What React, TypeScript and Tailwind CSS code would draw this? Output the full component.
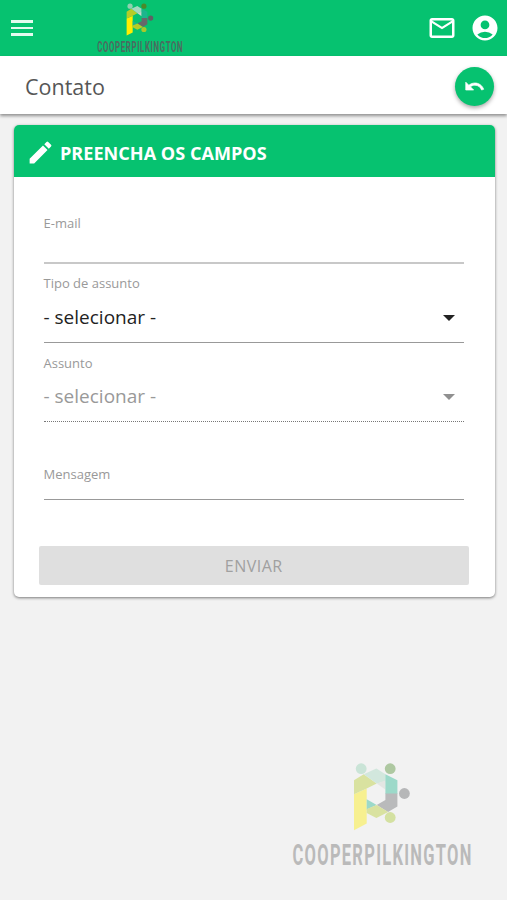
import React from 'react';
import { MdMailOutline, MdAccountCircle, MdEdit } from 'react-icons/md';

function Logo({ className, faded = false }: { className: string; faded?: boolean }) {
  const fade = faded ? 0.4 : 1;
  return (
    <svg viewBox="-4 0 188 112" className={className} role="img">
      <g opacity={fade} transform="translate(.7 .5)">
        <circle cx="68.5" cy="6.2" r="5.4" fill="#8fd0b0" />
        <circle cx="97.5" cy="6.2" r="5.4" fill="#4a8a2a" />
        <circle cx="111.7" cy="31" r="5.4" fill="#5f6064" />
        <circle cx="97.5" cy="55" r="5.4" fill="#a9c82a" />
        <path d="M61.3 31.700L74 26V61L61.3 67.700Z" fill="#ffee00" />
        <path d="M61.3 17.700L71 11.700L84 21L74 26L61.3 31.700Z" fill="#b5cc28" />
        <path d="M71 11.700L83.700 6L92.700 11.700V19L84 21Z" fill="#a3d9bf" />
        <path d="M84 21L92.700 18V27Z" fill="#cfd5cf" />
        <path d="M92.700 11.700L104.700 17.700V31.500H92.700Z" fill="#1db58d" />
        <path d="M92.700 31H104.700V44L95.300 49.500L84 42.500L92.700 37.500Z" fill="#66686a" />
        <path d="M74 36.700L84 42.500L74 47Z" fill="#1db58d" />
        <path d="M74 46.500L84 42.500L95.500 49.500L83.700 55.500L74 50.500Z" fill="#b5cc28" />
      </g>
      <text
        transform="translate(0 103) scale(.55 1)"
        x="1"
        y="0"
        textLength="325"
        lengthAdjust="spacing"
        fontFamily="Roboto, sans-serif"
        fontSize="30"
        fontWeight="700"
        fill={faded ? '#bababa' : '#4d6b60'}
      >
        COOPERPILKINGTON
      </text>
    </svg>
  );
}

export default function App() {
  return (
    <div className="flex h-[900px] w-full flex-col bg-[#f2f2f2] font-['Open_Sans','Noto_Sans',sans-serif]">
      <header className="flex h-14 shrink-0 items-center bg-[#06c270] text-white">
        <div className="ml-[10.5px] flex w-[22.5px] flex-col gap-[3.5px]">
          <span className="h-[2.7px] bg-[#e4fbef]" />
          <span className="h-[2.7px] bg-[#e4fbef]" />
          <span className="h-[2.7px] bg-[#e4fbef]" />
        </div>
        <Logo className="mt-[3px] ml-[62px] h-[53.500px] w-[90px]" />
        <MdMailOutline className="mr-[1px] ml-auto size-[30px]" />
        <MdAccountCircle className="mr-[7px] ml-[12px] size-[30px]" />
      </header>

      <div className="flex h-[58px] shrink-0 items-center justify-between bg-white pr-[13.5px] pl-[25px] shadow-[0_2px_3px_rgba(0,0,0,0.4)]">
        <h1 className="mt-1 text-[21.5px] text-[#565656]">Contato</h1>
        <button className="mt-[3px] flex size-[39px] items-center justify-center rounded-full bg-[#06c270] text-white shadow-[0_2px_4px_rgba(0,0,0,0.35)]">
          <svg viewBox="0 0 24 24" className="size-[21px] fill-white stroke-white stroke-[0.8px]">
            <path d="M12.500 8c-2.650 0-5.050.99-6.900 2.600L2 7v9h9l-3.620-3.620c1.390-1.160 3.160-1.880 5.120-1.880 3.540 0 6.550 2.310 7.600 5.500l2.370-.78C21.080 11.030 17.150 8 12.500 8z" />
          </svg>
        </button>
      </div>

      <main className="mx-[14px] mt-[11px] mr-3 flex h-[472px] shrink-0 flex-col overflow-hidden rounded-[5px] bg-white shadow-[0_1px_3px_rgba(0,0,0,0.5)]">
        <div className="flex h-[52px] shrink-0 items-center gap-[5px] bg-[#06c270] pl-3 text-white">
          <MdEdit className="mt-[3px] size-[29px]" />
          <h2 className="mt-[6px] text-[18.1px] font-bold">PREENCHA OS CAMPOS</h2>
        </div>
        <form className="flex flex-col pr-[31px] pl-[29.5px] text-[13px] text-[#999999]">
          <div className="mt-[36px] h-[51px] border-b-2 border-[#c8c8c8]">
            <label className="block leading-[20px]">E-mail</label>
          </div>
          <div className="h-[79px] border-b border-[#999999] pt-[9px]">
            <label className="block leading-[20px]">Tipo de assunto</label>
            <div className="mt-[10px] flex items-center justify-between pr-[9px] text-[19px] leading-[28px] text-[#222222]">
              <span>- selecionar -</span>
              <span className="mt-[2px] border-x-[6px] border-t-[6px] border-x-transparent border-t-[#222222]" />
            </div>
          </div>
          <div className="h-[79px] border-b border-dotted border-[#777777] pt-[10px]">
            <label className="block leading-[20px]">Assunto</label>
            <div className="mt-[9px] flex items-center justify-between pr-[9px] text-[19px] leading-[28px]">
              <span>- selecionar -</span>
              <span className="mt-[2px] border-x-[6px] border-t-[6px] border-x-transparent border-t-[#909090]" />
            </div>
          </div>
          <div className="h-[78px] border-b border-[#999999] pt-[42px]">
            <label className="block leading-[20px]">Mensagem</label>
          </div>
          <button className="-mx-[5px] mt-[46px] h-[39px] rounded-[2px] bg-[#dfdfdf] text-[16px] tracking-[0.5px] text-[#a0a0a0]">
            ENVIAR
          </button>
        </form>
      </main>

      <footer className="mt-[165px] flex justify-end pr-[31px]">
        <Logo faded className="h-[112px] w-[188px]" />
      </footer>
    </div>
  );
}
